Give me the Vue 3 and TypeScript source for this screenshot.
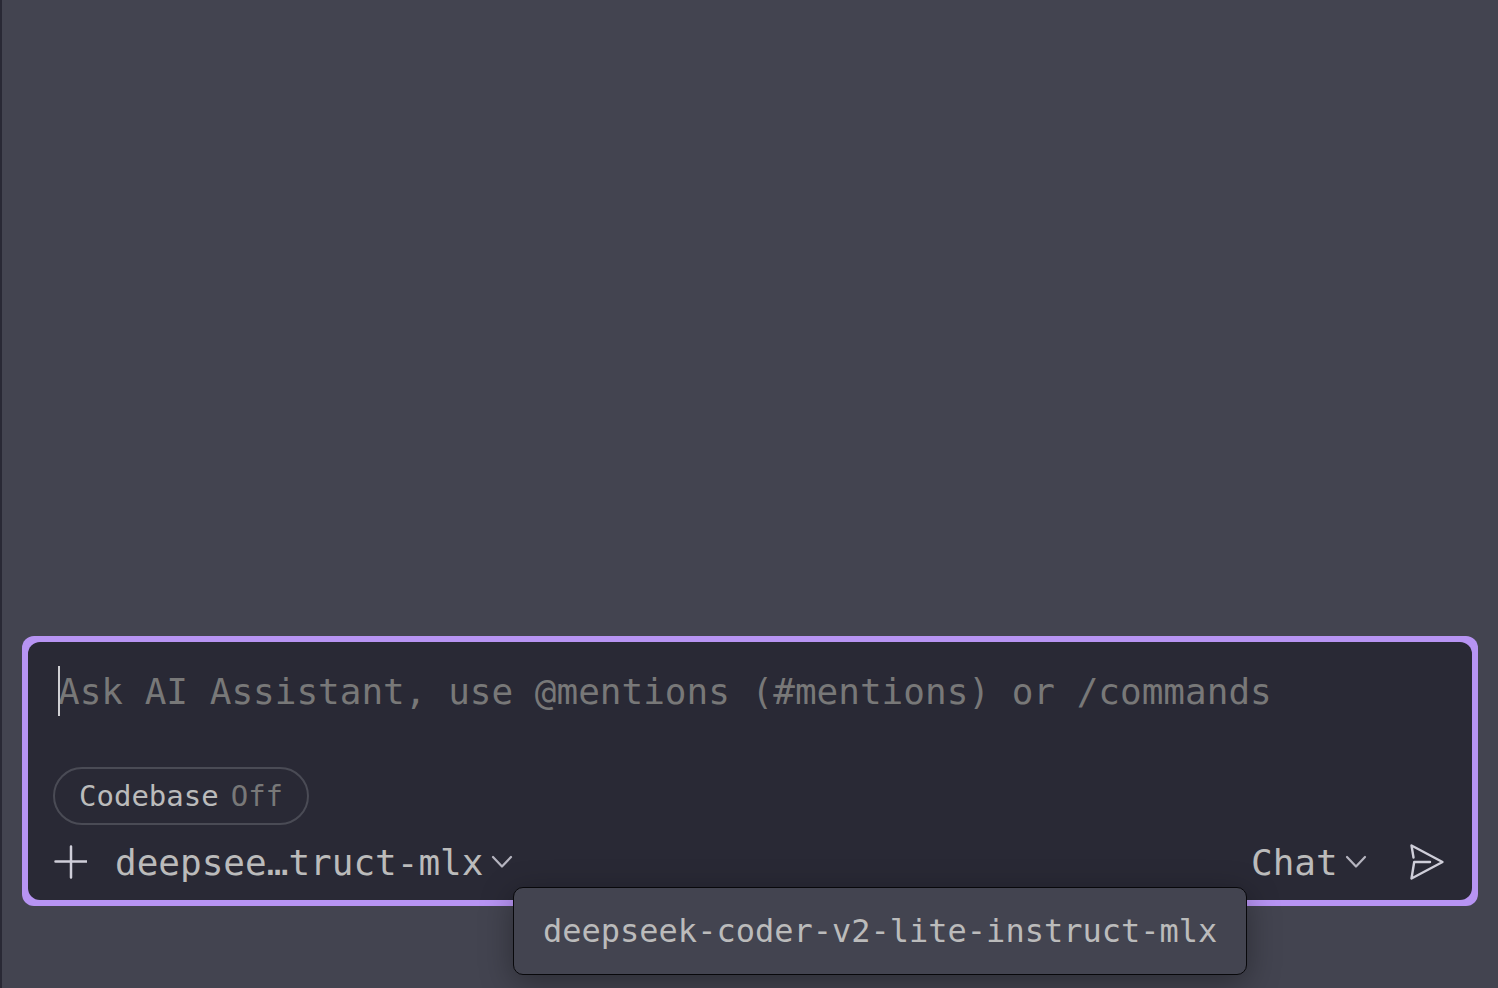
<script setup lang="ts">
import { ref } from 'vue'

interface Option {
  id: string
  label: string
}

const models: Option[] = [{ id: 'deepseek-coder-v2-lite-instruct-mlx', label: 'deepsee…truct-mlx' }]
const modes: Option[] = [{ id: 'chat', label: 'Chat' }]

const model = ref(models[0].id)
const mode = ref(modes[0].id)
const prompt = ref('')
const codebase = ref(false)
</script>

<template>
  <main class="panel">
    <form class="frame" @submit.prevent>
      <div class="composer">
        <div class="prompt">
          <input
            v-model="prompt"
            class="prompt-input"
            type="text"
            aria-label="Message"
            placeholder="Ask AI Assistant, use @mentions (#mentions) or /commands"
          />
          <span class="caret" aria-hidden="true"></span>
        </div>

        <button class="chip" type="button" :aria-pressed="codebase" @click="codebase = !codebase">
          <span>Codebase</span>
          <span class="chip-state">{{ codebase ? 'On' : 'Off' }}</span>
        </button>

        <div class="toolbar">
          <button class="icon-button" type="button" aria-label="Add attachment">
            <svg class="plus" viewBox="0 0 34 34" aria-hidden="true">
              <path d="M18 1.5v31M2.5 16.5h31" />
            </svg>
          </button>

          <div class="picker">
            <select v-model="model" class="picker-select" aria-label="Model" aria-describedby="model-tip">
              <option v-for="item in models" :key="item.id" :value="item.id">{{ item.label }}</option>
            </select>
            <svg class="chevron" viewBox="0 0 22 14" aria-hidden="true">
              <path d="M2 2l9 9.5L20 2" />
            </svg>
            <div id="model-tip" class="tooltip" role="tooltip">{{ model }}</div>
          </div>

          <div class="picker mode">
            <select v-model="mode" class="picker-select" aria-label="Mode">
              <option v-for="item in modes" :key="item.id" :value="item.id">{{ item.label }}</option>
            </select>
            <svg class="chevron" viewBox="0 0 22 14" aria-hidden="true">
              <path d="M2 2l9 9.5L20 2" />
            </svg>
          </div>

          <button class="icon-button send" type="submit" aria-label="Send">
            <svg class="plane" viewBox="0 0 36 38" aria-hidden="true">
              <path d="M4.5 14.5L2.5 2.5L33.5 19L2.5 35.5L5.2 19H21" />
            </svg>
          </button>
        </div>
      </div>
    </form>
  </main>
</template>

<style>
body {
  margin: 0;
  background: #434450;
}
</style>

<style scoped>
.panel {
  box-sizing: border-box;
  min-height: 100vh;
  display: flex;
  flex-direction: column;
  justify-content: flex-end;
  overflow: hidden;
  padding: 20px 20px 82px;
  border-left: 2px solid #292935;
  background: #434450;
  color: #bbbbbb;
  font-family: 'DejaVu Sans Mono', 'Liberation Mono', monospace;
  font-size: 36px;
}

.frame {
  padding: 6px;
  border-radius: 12px;
  background: #b794f3;
}

.composer {
  display: flex;
  flex-direction: column;
  align-items: flex-start;
  padding: 24px 25px 14px;
  border-radius: 12px;
  background: #292935;
}

.prompt {
  position: relative;
  width: 100%;
  height: 50px;
  margin-bottom: 51px;
}

.prompt-input {
  box-sizing: border-box;
  width: 100%;
  height: 50px;
  padding: 0 5px;
  border: 0;
  outline: 0;
  background: transparent;
  color: inherit;
  font: inherit;
}

.prompt-input::placeholder {
  color: #787878;
  opacity: 1;
}

.caret {
  position: absolute;
  top: 0;
  left: 5px;
  width: 2px;
  height: 50px;
  background: #d0d0d4;
}

.chip {
  display: flex;
  align-items: center;
  gap: 12px;
  height: 58px;
  padding: 0 24px;
  border: 2px solid #4a4b55;
  border-radius: 29px;
  background: transparent;
  color: inherit;
  font: inherit;
  font-size: 29px;
}

.chip-state {
  color: #787878;
}

.toolbar {
  display: flex;
  align-items: center;
  width: 100%;
  height: 48px;
  margin-top: 13px;
}

.icon-button {
  display: flex;
  align-items: center;
  padding: 0;
  border: 0;
  background: transparent;
  color: #cfced9;
}

svg {
  display: block;
  fill: none;
  stroke: currentColor;
  stroke-linecap: round;
  stroke-linejoin: round;
}

.plus {
  width: 34px;
  height: 34px;
  stroke-width: 2.5;
}

.plane {
  width: 36px;
  height: 38px;
  stroke-width: 2.4;
}

.picker {
  position: relative;
  display: flex;
  align-items: center;
  gap: 7px;
  margin-left: 28px;
}

.picker-select {
  height: 48px;
  padding: 0;
  border: 0;
  outline: 0;
  appearance: none;
  background: transparent;
  color: inherit;
  font: inherit;
}

.chevron {
  width: 22px;
  height: 14px;
  color: #b5b4bf;
  stroke-width: 2.2;
  pointer-events: none;
}

.mode {
  margin-left: auto;
}

.send {
  margin: 0 2px 0 42px;
}

.tooltip {
  position: absolute;
  top: 49px;
  left: 100%;
  padding: 0 29px;
  border: 1px solid #08080b;
  border-radius: 10px;
  background: #434450;
  box-shadow: 0 8px 32px rgba(0, 0, 0, 0.35);
  font-size: 32px;
  line-height: 86px;
  white-space: nowrap;
}
</style>
